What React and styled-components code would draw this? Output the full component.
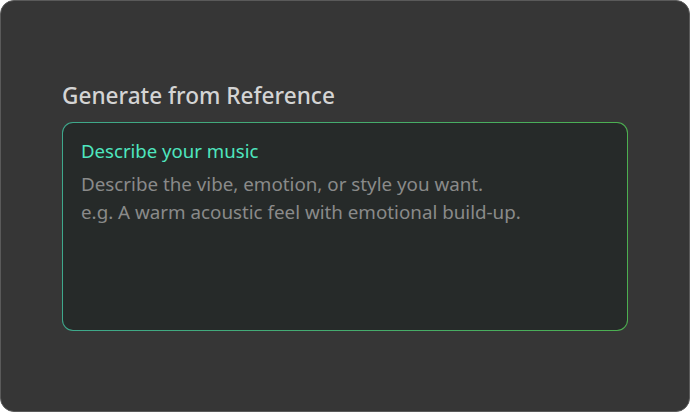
import React from "react";
import styled, { createGlobalStyle } from "styled-components";

const GlobalStyle = createGlobalStyle`
  html, body {
    margin: 0;
    padding: 0;
    background: #ffffff;
  }
  * {
    box-sizing: border-box;
  }
`;

const Card = styled.div`
  width: 690px;
  height: 412px;
  background: #363636;
  border: 1px solid #5a5a5a;
  border-radius: 14px;
  padding: 80px 61px 0 61px;
  font-family: "Noto Sans", "Open Sans", sans-serif;
`;

const Title = styled.h2`
  margin: 0 0 11px 0;
  font-size: 22.6px;
  font-weight: 500;
  line-height: 30px;
  color: #d4d4d4;
`;

const Field = styled.div`
  height: 209px;
  border: 1px solid transparent;
  border-radius: 11px;
  background:
    linear-gradient(#262a29, #262a29) padding-box,
    linear-gradient(90deg, #3ea88c, #4caf50) border-box;
  padding: 15px 18px;
  display: flex;
  flex-direction: column;
`;

const Label = styled.label`
  font-size: 18.6px;
  line-height: 26px;
  color: #4ee6bf;
  margin-bottom: 6px;
`;

const Input = styled.textarea`
  flex: 1;
  background: transparent;
  border: none;
  outline: none;
  resize: none;
  padding: 0;
  font-family: inherit;
  font-size: 18.8px;
  line-height: 28px;
  color: #d0d0d0;

  &::placeholder {
    color: #8a8a8a;
  }
`;

export default function App() {
  return (
    <>
      <GlobalStyle />
      <Card>
        <Title>Generate from Reference</Title>
        <Field>
          <Label>Describe your music</Label>
          <Input
            placeholder={"Describe the vibe, emotion, or style you want.\ne.g. A warm acoustic feel with emotional build-up."}
          />
        </Field>
      </Card>
    </>
  );
}
